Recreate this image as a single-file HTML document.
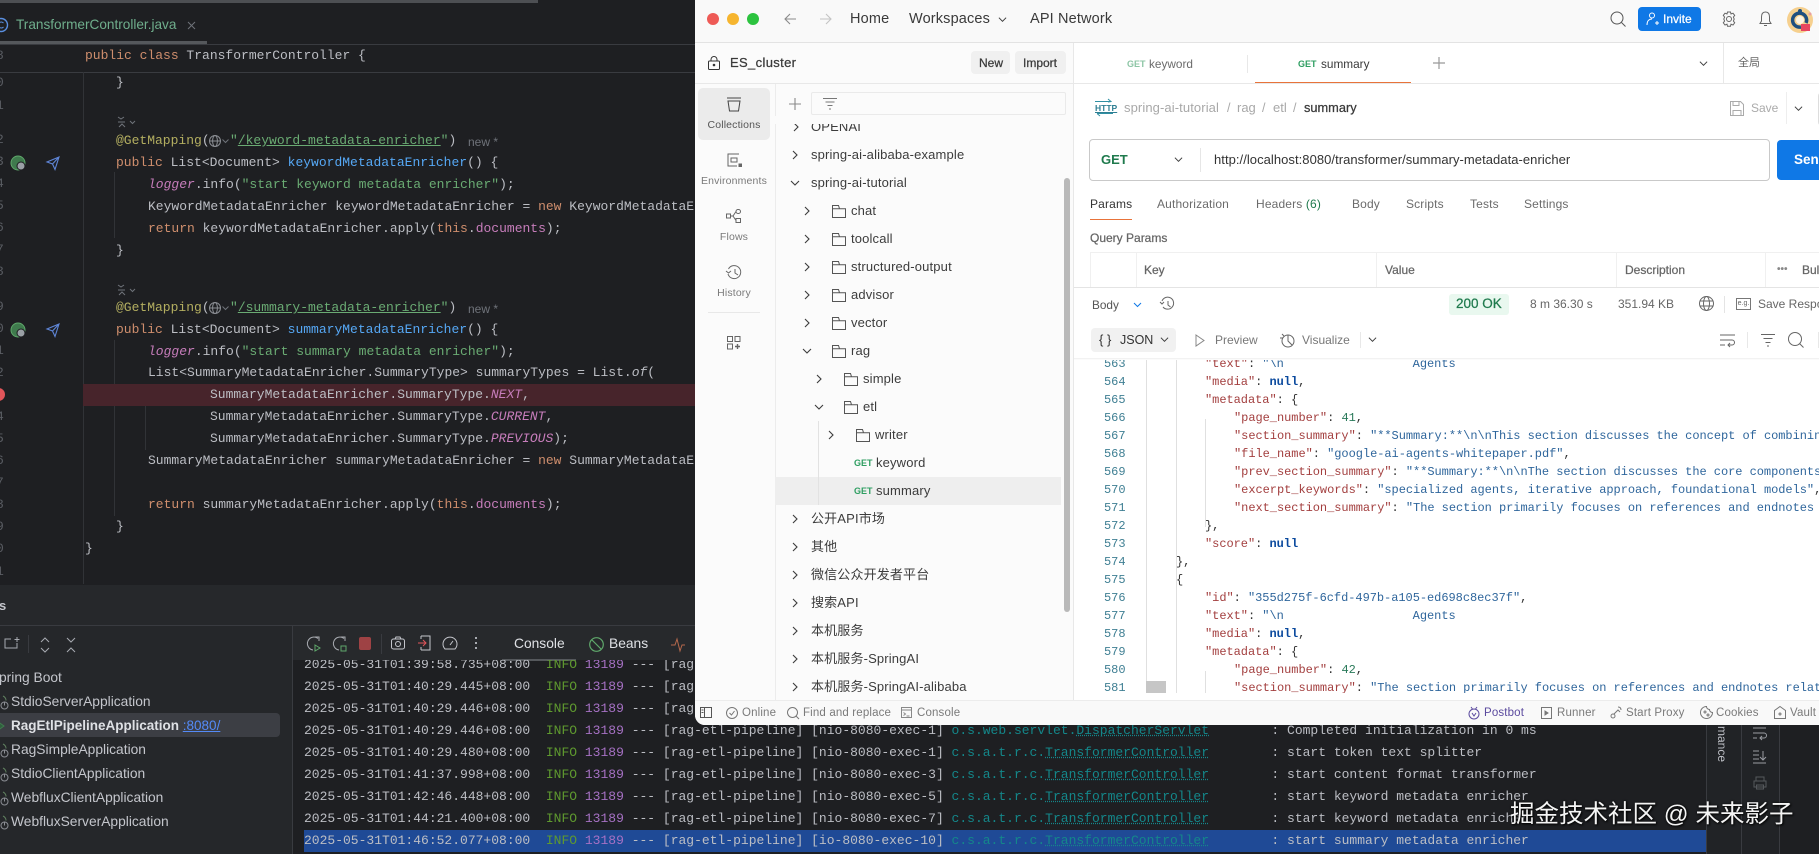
<!DOCTYPE html>
<html lang="zh">
<head>
<meta charset="utf-8">
<title>TransformerController and Postman</title>
<style>
html,body{margin:0;padding:0;width:1819px;height:854px;overflow:hidden;background:#1e1f22}
body{position:relative;font-family:"Liberation Sans","Noto Sans CJK SC",sans-serif}
.t{position:absolute;white-space:pre;line-height:20px;margin-top:-10px}
.b{position:absolute}
svg.i{position:absolute;fill:none;stroke:currentColor;stroke-width:1;overflow:visible}
#ide{position:absolute;left:0;top:0;width:1819px;height:854px;background:#1e1f22;overflow:hidden}
.c{font-family:"Liberation Mono",monospace;font-size:13px;color:#bcbec4}
.k{color:#cf8e6d}.f{color:#56a8f5}.s{color:#6aab73}.a{color:#b3ae60}.p{color:#c77dbb}.it{font-style:italic}
.n{font-family:"Liberation Mono",monospace;font-size:13px;color:#5a5d63}
.u{text-decoration:underline}
.nw{font-family:"Liberation Sans",sans-serif;font-size:12px;color:#6f737a}
.tree{font-size:13.8px;color:#c4c6cc}
.log{position:absolute;left:304px;white-space:pre;font-family:"Liberation Mono",monospace;font-size:13px;line-height:22px;height:22px;color:#bcbec4}
.log i{font-style:normal;color:#5f9a2f}.log b{font-weight:normal;color:#a671c4}.log em{font-style:normal;color:#14878a}.log u{color:#14878a;text-decoration:underline dotted}
#pm{position:absolute;left:0;top:0;width:1819px;height:725px;background:#fff;clip-path:inset(0 0 0 695px round 0 0 0 10px);color:#3a3a3a}
.tr{font-size:13px;color:#3c3c3c;letter-spacing:.15px}
.rl{font-size:10.5px;color:#7a7a7a;transform:translateX(-50%);letter-spacing:.15px}
.g{font-size:9px;font-weight:bold;color:#2f9e62}
.tb{font-size:12px;color:#6b6b6b;letter-spacing:.15px}
.j{font-family:"Liberation Mono",monospace;font-size:12px;color:#333;line-height:18px;margin-top:-9px;letter-spacing:-.04px}
.ln{color:#3f7f93}
.j u{text-decoration:none;color:#a33f3f}.j s{text-decoration:none;color:#2f669c}.j b{color:#0b4a9e}.j em{font-style:normal;color:#2a7a5a}
.sb{font-size:11.5px;color:#7a7a7a;letter-spacing:.15px}
.m{font-weight:normal;-webkit-text-stroke:.25px currentColor}
</style>
</head>
<body>
<svg width="0" height="0" style="position:absolute">
<symbol id="cr" viewBox="0 0 10 10"><path d="M3 1l4 4-4 4" fill="none" stroke="#3c3c3c" stroke-width="1.1"/></symbol>
<symbol id="cd" viewBox="0 0 10 10"><path d="M1 3l4 4 4-4" fill="none" stroke="#3c3c3c" stroke-width="1.1"/></symbol>
<symbol id="fo" viewBox="0 0 14 13"><path d="M.5 12.5V.5h6l1 3.2h6v8.800zM.5 3.700h7" fill="none" stroke="#555" stroke-width="1"/></symbol>
<symbol id="pw" viewBox="0 0 9 16"><path d="M3 1c2 1 3 2.500 3 4.500" fill="none" stroke="#5f7f5f" stroke-width="1"/><circle cx="4.500" cy="10.500" r="3.500" fill="none" stroke="#8a8d93" stroke-width="1"/><path d="M4.500 6.500v4" fill="none" stroke="#8a8d93" stroke-width="1"/></symbol>
</svg>

<div id="ide">
  <div class="b" style="left:0;top:0;width:538px;height:3px;background:#4d4f53"></div>
  <div class="b" style="left:0;top:44px;width:695px;height:1px;background:#393b40"></div>
  <div class="b" style="left:0;top:41px;width:207px;height:3px;background:#55585c"></div>
  <svg class="i" style="left:-6px;top:18px;color:#5a8fe0" width="14" height="14"><circle cx="7" cy="7" r="6.500" stroke-width="1.400"/><path d="M9.500 5a3 3 0 1 0 0 4"/></svg>
  <div class="t" style="left:16px;top:25px;font-size:13.600px;color:#6fae8c">TransformerController.java</div>
  <svg class="i" style="left:187px;top:21px;color:#6f737a" width="9" height="9"><path d="M1 1l7 7M8 1l-7 7"/></svg>
  <div class="b" style="left:0;top:72px;width:695px;height:1px;background:#393b40"></div>
  <div class="b" style="left:83px;top:72px;width:1px;height:512px;background:#313337"></div>
  <div class="b" style="left:114px;top:172px;width:1px;height:66px;background:#313337"></div>
  <div class="b" style="left:114px;top:340px;width:1px;height:176px;background:#313337"></div>
  <div class="b" style="left:145px;top:384px;width:1px;height:66px;background:#313337"></div>
  <div class="b" style="left:83px;top:384px;width:612px;height:22px;background:#47242b"></div>
  <div class="b" style="left:-8px;top:388px;width:13px;height:13px;border-radius:50%;background:#e2555a"></div>

  <div class="t n" style="left:-4px;top:56px">8</div><div class="t n" style="left:-4px;top:83px">0</div><div class="t n" style="left:-4px;top:106px">1</div><div class="t n" style="left:-4px;top:140px">2</div><div class="t n" style="left:-4px;top:162px">3</div><div class="t n" style="left:-4px;top:184px">4</div><div class="t n" style="left:-4px;top:206px">5</div><div class="t n" style="left:-4px;top:228px">6</div><div class="t n" style="left:-4px;top:250px">7</div><div class="t n" style="left:-4px;top:272px">8</div><div class="t n" style="left:-4px;top:307px">9</div><div class="t n" style="left:-4px;top:329px">0</div><div class="t n" style="left:-4px;top:351px">1</div><div class="t n" style="left:-4px;top:373px">2</div><div class="t n" style="left:-4px;top:417px">4</div><div class="t n" style="left:-4px;top:439px">5</div><div class="t n" style="left:-4px;top:461px">6</div><div class="t n" style="left:-4px;top:483px">7</div><div class="t n" style="left:-4px;top:505px">8</div><div class="t n" style="left:-4px;top:527px">9</div><div class="t n" style="left:-4px;top:549px">0</div><div class="t n" style="left:-4px;top:572px">1</div>

  <div class="t c" style="left:85px;top:56px"><span class="k">public class</span> TransformerController {</div>
  <div class="t c" style="left:116px;top:83px">}</div>
  <svg class="i" style="left:117px;top:116px;color:#6f737a" width="20" height="12"><path d="M1 1l3 2 3-2M1 6h7M2 11l3-3 3 3M13 5l2.500 2.500L18 5"/></svg>
  <div class="t c" style="left:116px;top:141px"><span class="a">@GetMapping</span>(</div>
  <svg class="i" style="left:209px;top:135px;color:#8a8d93" width="12" height="12"><circle cx="6" cy="6" r="5.500"/><ellipse cx="6" cy="6" rx="2.400" ry="5.500"/><path d="M.5 6h11"/></svg>
  <svg class="i" style="left:222px;top:139px;color:#6f737a" width="7" height="5"><path d="M.5 .5l3 3 3-3"/></svg>
  <div class="t c" style="left:230px;top:141px"><span class="s">"<span class="u">/keyword-metadata-enricher</span>"</span>)</div>
  <div class="t nw" style="left:468px;top:142px">new *</div>
  <div class="t c" style="left:116px;top:163px"><span class="k">public</span> List&lt;Document&gt; <span class="f">keywordMetadataEnricher</span>() {</div>
  <div class="t c" style="left:148px;top:185px"><span class="p it">logger</span>.info(<span class="s">"start keyword metadata enricher"</span>);</div>
  <div class="t c" style="left:148px;top:207px">KeywordMetadataEnricher keywordMetadataEnricher = <span class="k">new</span> KeywordMetadataEnricher(chatModel, List.of(</div>
  <div class="t c" style="left:148px;top:229px"><span class="k">return</span> keywordMetadataEnricher.apply(<span class="k">this</span>.<span class="p">documents</span>);</div>
  <div class="t c" style="left:116px;top:251px">}</div>
  <svg class="i" style="left:117px;top:284px;color:#6f737a" width="20" height="12"><path d="M1 1l3 2 3-2M1 6h7M2 11l3-3 3 3M13 5l2.500 2.500L18 5"/></svg>
  <div class="t c" style="left:116px;top:308px"><span class="a">@GetMapping</span>(</div>
  <svg class="i" style="left:209px;top:302px;color:#8a8d93" width="12" height="12"><circle cx="6" cy="6" r="5.500"/><ellipse cx="6" cy="6" rx="2.400" ry="5.500"/><path d="M.5 6h11"/></svg>
  <svg class="i" style="left:222px;top:306px;color:#6f737a" width="7" height="5"><path d="M.5 .5l3 3 3-3"/></svg>
  <div class="t c" style="left:230px;top:308px"><span class="s">"<span class="u">/summary-metadata-enricher</span>"</span>)</div>
  <div class="t nw" style="left:468px;top:309px">new *</div>
  <div class="t c" style="left:116px;top:330px"><span class="k">public</span> List&lt;Document&gt; <span class="f">summaryMetadataEnricher</span>() {</div>
  <div class="t c" style="left:148px;top:352px"><span class="p it">logger</span>.info(<span class="s">"start summary metadata enricher"</span>);</div>
  <div class="t c" style="left:148px;top:373px">List&lt;SummaryMetadataEnricher.SummaryType&gt; summaryTypes = List.<span class="it">of</span>(</div>
  <div class="t c" style="left:210px;top:395px">SummaryMetadataEnricher.SummaryType.<span class="p it">NEXT</span>,</div>
  <div class="t c" style="left:210px;top:417px">SummaryMetadataEnricher.SummaryType.<span class="p it">CURRENT</span>,</div>
  <div class="t c" style="left:210px;top:439px">SummaryMetadataEnricher.SummaryType.<span class="p it">PREVIOUS</span>);</div>
  <div class="t c" style="left:148px;top:461px">SummaryMetadataEnricher summaryMetadataEnricher = <span class="k">new</span> SummaryMetadataEnricher(chatModel, summaryTypes);</div>
  <div class="t c" style="left:148px;top:505px"><span class="k">return</span> summaryMetadataEnricher.apply(<span class="k">this</span>.<span class="p">documents</span>);</div>
  <div class="t c" style="left:116px;top:527px">}</div>
  <div class="t c" style="left:85px;top:549px">}</div>

  <svg class="i" style="left:10px;top:155px" width="16" height="16"><circle cx="8" cy="8" r="7" fill="#3f7a4d" stroke="#5fa86b"/><circle cx="11" cy="11" r="4" fill="#9aa0a6" stroke="#1e1f22"/></svg>
  <svg class="i" style="left:10px;top:322px" width="16" height="16"><circle cx="8" cy="8" r="7" fill="#3f7a4d" stroke="#5fa86b"/><circle cx="11" cy="11" r="4" fill="#9aa0a6" stroke="#1e1f22"/></svg>
  <svg class="i" style="left:46px;top:156px;color:#5f86d8" width="14" height="14"><path d="M13 1L1 6l5.500 2L9 13.500z M13 1L6.500 8" stroke-width="1.100"/></svg>
  <svg class="i" style="left:46px;top:323px;color:#5f86d8" width="14" height="14"><path d="M13 1L1 6l5.500 2L9 13.500z M13 1L6.500 8" stroke-width="1.100"/></svg>

  <!-- bottom panel -->
  <div class="b" style="left:0;top:585px;width:1819px;height:40px;background:#26282b"></div>
  <div class="b" style="left:0;top:625px;width:1819px;height:1px;background:#393b40"></div>
  <div class="b" style="left:0;top:626px;width:292px;height:228px;background:#25272a"></div>
  <div class="b" style="left:292px;top:626px;width:1px;height:228px;background:#393b40"></div>
  <div class="b" style="left:293px;top:626px;width:1526px;height:34px;background:#27292c"></div>
  <div class="t" style="left:-1px;top:606px;font-size:13px;font-weight:bold;color:#c4c6cc">s</div>
  <svg class="i" style="left:4px;top:636px;color:#a8abb1" width="17" height="14"><path d="M7 3H1v9h12V7M13 1v5M10.500 3.500h5"/></svg>
  <div class="b" style="left:28px;top:635px;width:1px;height:18px;background:#393b40"></div>
  <svg class="i" style="left:40px;top:637px;color:#a8abb1" width="10" height="16"><path d="M1 5l4-4 4 4M1 11l4 4 4-4"/></svg>
  <svg class="i" style="left:66px;top:637px;color:#a8abb1" width="10" height="16"><path d="M1 1l4 4 4-4M1 15l4-4 4 4"/></svg>
  <div class="t tree" style="left:-1px;top:678px;letter-spacing:0">pring Boot</div>
  <div class="b" style="left:0;top:713px;width:280px;height:24px;background:#3c3e44;border-radius:0 4px 4px 0"></div>
  <div class="t tree" style="left:11px;top:702px">StdioServerApplication</div>
  <div class="t tree" style="left:11px;top:726px;font-size:13.500px;font-weight:bold;color:#dfe1e5">RagEtlPipelineApplication <span style="font-weight:normal;color:#548af7;text-decoration:underline">:8080/</span></div>
  <div class="t tree" style="left:11px;top:750px">RagSimpleApplication</div>
  <div class="t tree" style="left:11px;top:774px">StdioClientApplication</div>
  <div class="t tree" style="left:11px;top:798px">WebfluxClientApplication</div>
  <div class="t tree" style="left:11px;top:822px">WebfluxServerApplication</div>
  <svg class="i" style="left:0;top:695px" width="9" height="16"><use href="#pw"/></svg>
  <svg class="i" style="left:-4px;top:720px;color:#3f7a4d" width="10" height="12"><path d="M1 1l7 5-7 5z" fill="#2f5f3d"/></svg>
  <svg class="i" style="left:0;top:743px" width="9" height="16"><use href="#pw"/></svg>
  <svg class="i" style="left:0;top:767px" width="9" height="16"><use href="#pw"/></svg>
  <svg class="i" style="left:0;top:791px" width="9" height="16"><use href="#pw"/></svg>
  <svg class="i" style="left:0;top:815px" width="9" height="16"><use href="#pw"/></svg>

  <!-- console toolbar -->
  <svg class="i" style="left:306px;top:635px;color:#a8abb1" width="16" height="18"><path d="M12 3.500A6.500 6.500 0 1 0 7 15"/><path d="M9 2h4v4"/><path d="M9 10l5 3-5 3z" stroke="#5fa86b"/></svg>
  <svg class="i" style="left:332px;top:635px;color:#a8abb1" width="16" height="18"><path d="M12 3.500A6.500 6.500 0 1 0 7 15"/><path d="M9 2h4v4"/><rect x="9" y="11" width="5" height="5" stroke="#5fa86b"/></svg>
  <div class="b" style="left:359px;top:637px;width:12px;height:13px;border-radius:2px;background:#9e4244"></div>
  <div class="b" style="left:381px;top:634px;width:1px;height:20px;background:#393b40"></div>
  <svg class="i" style="left:391px;top:636px;color:#c4c6cc" width="15" height="15"><rect x=".5" y="3" width="13" height="10" rx="2"/><circle cx="7" cy="8" r="2.500"/><path d="M4 3l1-2h4l1 2"/></svg>
  <svg class="i" style="left:418px;top:635px" width="14" height="16"><path d="M3 1h9v14H3M3 4V1M3 15v-3" stroke="#c4c6cc"/><path d="M0 8h8M5 5l3 3-3 3" stroke="#e2555a"/></svg>
  <svg class="i" style="left:442px;top:636px;color:#c4c6cc" width="17" height="16"><path d="M3 13a7 7 0 1 1 10 0z M8 9l3-4"/></svg>
  <div class="b" style="left:475px;top:637px;width:2px;height:2px;background:#a8abb1;box-shadow:0 5px 0 #a8abb1,0 10px 0 #a8abb1"></div>
  <div class="t" style="left:514px;top:644px;font-size:13.800px;color:#dfe1e5">Console</div>
  <div class="b" style="left:502px;top:659px;width:74px;height:2px;background:#55585c"></div>
  <svg class="i" style="left:589px;top:637px;color:#5fa86b" width="15" height="15"><circle cx="7.500" cy="7.500" r="6.800" stroke-width="1.200"/><path d="M3 3l9 9" stroke-width="1.200"/></svg>
  <div class="t" style="left:609px;top:644px;font-size:13.800px;color:#dfe1e5">Beans</div>
  <svg class="i" style="left:671px;top:637px;color:#b5684b" width="15" height="15"><path d="M0 8h4l2-6 3 12 2-6h3"/></svg>

  <div class="b" style="left:293px;top:660px;width:1526px;height:194px;overflow:hidden">
    <div class="b" style="left:11px;top:170px;width:1402px;height:22px;background:#1f4a96"></div>
    <div class="log" style="left:11px;top:-6px">2025-05-31T01:39:58.735+08:00  <i>INFO</i> <b>13189</b> --- [rag-etl-pipeline] [nio-8080-exec-1]</div>
    <div class="log" style="left:11px;top:16px">2025-05-31T01:40:29.445+08:00  <i>INFO</i> <b>13189</b> --- [rag-etl-pipeline] [nio-8080-exec-1]</div>
    <div class="log" style="left:11px;top:38px">2025-05-31T01:40:29.446+08:00  <i>INFO</i> <b>13189</b> --- [rag-etl-pipeline] [nio-8080-exec-1]</div>
    <div class="log" style="left:11px;top:60px">2025-05-31T01:40:29.446+08:00  <i>INFO</i> <b>13189</b> --- [rag-etl-pipeline] [nio-8080-exec-1] <em>o.s.web.servlet.</em><u>DispatcherServlet</u>        : Completed initialization in 0 ms</div>
    <div class="log" style="left:11px;top:82px">2025-05-31T01:40:29.480+08:00  <i>INFO</i> <b>13189</b> --- [rag-etl-pipeline] [nio-8080-exec-1] <em>c.s.a.t.r.c.</em><u>TransformerController</u>        : start token text splitter</div>
    <div class="log" style="left:11px;top:104px">2025-05-31T01:41:37.998+08:00  <i>INFO</i> <b>13189</b> --- [rag-etl-pipeline] [nio-8080-exec-3] <em>c.s.a.t.r.c.</em><u>TransformerController</u>        : start content format transformer</div>
    <div class="log" style="left:11px;top:126px">2025-05-31T01:42:46.448+08:00  <i>INFO</i> <b>13189</b> --- [rag-etl-pipeline] [nio-8080-exec-5] <em>c.s.a.t.r.c.</em><u>TransformerController</u>        : start keyword metadata enricher</div>
    <div class="log" style="left:11px;top:148px">2025-05-31T01:44:21.400+08:00  <i>INFO</i> <b>13189</b> --- [rag-etl-pipeline] [nio-8080-exec-7] <em>c.s.a.t.r.c.</em><u>TransformerController</u>        : start keyword metadata enricher</div>
    <div class="log" style="left:11px;top:170px">2025-05-31T01:46:52.077+08:00  <i>INFO</i> <b>13189</b> --- [rag-etl-pipeline] [io-8080-exec-10] <em>c.s.a.t.r.c.</em><u>TransformerController</u>        : start summary metadata enricher</div>
  </div>

  <!-- right strips -->
  <div class="b" style="left:1706px;top:660px;width:35px;height:194px;background:#212326;border-left:1px solid #393b40;box-sizing:border-box"></div>
  <div class="b" style="left:1741px;top:660px;width:39px;height:194px;background:#212326;border-left:1px solid #393b40;border-right:1px solid #393b40;box-sizing:border-box"></div>
  <div class="b" style="left:1780px;top:660px;width:39px;height:194px;background:#1e1f22"></div>
  <div class="t" style="left:1722px;top:744px;font-size:12px;color:#bcbec4;transform:translate(-50%,0) rotate(90deg)">mance</div>
  <svg class="i" style="left:1753px;top:726px;color:#9a9da3" width="14" height="14"><path d="M0 2h13M0 7h11a2.500 2.500 0 0 1 0 5H7M9 10l-2 2 2 2M0 12h4"/></svg>
  <svg class="i" style="left:1753px;top:750px;color:#9a9da3" width="14" height="14"><path d="M0 1h6M0 5h6M0 9h6M10 1v9M7 7l3 3 3-3M0 13h13"/></svg>
  <svg class="i" style="left:1753px;top:776px;color:#55585c" width="14" height="14"><rect x="3" y="1" width="8" height="4"/><rect x="1" y="5" width="12" height="6"/><rect x="3.500" y="9" width="7" height="4"/></svg>

  <div class="t" style="left:1510px;top:815px;font-size:24.500px;color:#f4f4f4;text-shadow:1px 1px 2px #000,0 0 2px rgba(0,0,0,.7);line-height:30px;margin-top:-15px">掘金技术社区 @ 未来影子</div>
</div>

<div id="pm">
  <!-- top bar -->
  <div class="b" style="left:695px;top:0;width:1124px;height:42px;background:#f9f9f9;border-bottom:1px solid #e3e3e3"></div>
  <div class="b" style="left:707px;top:13px;width:12px;height:12px;border-radius:50%;background:#ee5a56"></div>
  <div class="b" style="left:727px;top:13px;width:12px;height:12px;border-radius:50%;background:#f6b52f"></div>
  <div class="b" style="left:747px;top:13px;width:12px;height:12px;border-radius:50%;background:#2cc33f"></div>
  <svg class="i" style="left:784px;top:13px;color:#8a8a8a" width="13" height="12"><path d="M12 6H1M6 1L1 6l5 5" stroke-width="1.100"/></svg>
  <svg class="i" style="left:819px;top:13px;color:#c4c4c4" width="13" height="12"><path d="M1 6h11M7 1l5 5-5 5" stroke-width="1.100"/></svg>
  <div class="t" style="left:850px;top:19px;font-size:14.500px;color:#3a3a3a;letter-spacing:.15px">Home</div>
  <div class="t" style="left:909px;top:19px;font-size:14.500px;color:#3a3a3a;letter-spacing:.15px">Workspaces</div>
  <svg class="i" style="left:998px;top:15px;width:9px;height:9px"><use href="#cd" width="9" height="9"/></svg>
  <div class="t" style="left:1030px;top:19px;font-size:14.500px;color:#3a3a3a;letter-spacing:.15px">API Network</div>
  <svg class="i" style="left:1610px;top:11px;color:#555" width="16" height="16"><circle cx="7" cy="7" r="6"/><path d="M11.500 11.500l4 4"/></svg>
  <div class="b" style="left:1638px;top:7px;width:63px;height:24px;border-radius:4px;background:#0f78e6"></div>
  <svg class="i" style="left:1646px;top:12px;color:#fff" width="13" height="14"><circle cx="6" cy="3.500" r="2.500"/><path d="M1 13c0-4 2-6 5-6M9 11h4M11 9v4"/></svg>
  <div class="t m" style="left:1663px;top:19px;font-size:12px;color:#fff">Invite</div>
  <svg class="i" style="left:1721px;top:11px;color:#666" width="16" height="16"><circle cx="8" cy="8" r="2.500"/><path d="M6.500 1h3l.5 2 2-.8 1.700 2.200-1.300 1.700.8 2-.8 2 1.300 1.700-1.700 2.200-2-.8-.5 2h-3l-.5-2-2 .8-1.700-2.200 1.300-1.700-.8-2 .8-2L2.300 4.400 4 2.200l2 .8z"/></svg>
  <svg class="i" style="left:1759px;top:11px;color:#666" width="13" height="16"><path d="M6.500 1c-3 0-4 2-4 5v4L1 12.500h11L10.500 10V6c0-3-1-5-4-5zM5 14.500h3"/></svg>
  <svg class="i" style="left:1787px;top:7px" width="26" height="26"><circle cx="13" cy="13" r="13" fill="#f6d08e" stroke="none"/><path d="M19 16a7 7 0 1 0-5 4" stroke="#1f4f7f" stroke-width="3.500" fill="none"/><circle cx="13" cy="13" r="4" fill="#fbf3e4" stroke="none"/><rect x="14" y="17" width="9" height="7" fill="#e8455f" stroke="none"/><circle cx="13" cy="4" r="2" fill="#1f4f7f" stroke="none"/><circle cx="23" cy="7" r="1.500" fill="#e8a0a0" stroke="none"/></svg>

  <!-- left column -->
  <div class="b" style="left:695px;top:43px;width:378px;height:657px;background:#fbfbfb;border-right:1px solid #e8e8e8"></div>
  <div class="b" style="left:695px;top:83px;width:378px;height:1px;background:#e8e8e8"></div>
  <div class="b" style="left:775px;top:84px;width:1px;height:616px;background:#ececec"></div>
  <svg class="i" style="left:708px;top:56px;color:#333" width="12" height="14"><rect x=".5" y="5" width="11" height="8.500" rx="1"/><path d="M3 5V3.500a3 3 0 0 1 6 0V5"/><circle cx="6" cy="9" r=".8" fill="#333"/></svg>
  <div class="t m" style="left:730px;top:63px;font-size:13px;color:#3a3a3a;letter-spacing:.35px">ES_cluster</div>
  <div class="b" style="left:971px;top:51px;width:39px;height:23px;background:#f0f0f0;border-radius:4px"></div>
  <div class="b" style="left:1015px;top:51px;width:51px;height:23px;background:#f0f0f0;border-radius:4px"></div>
  <div class="t m" style="left:979px;top:63px;font-size:12px;color:#3a3a3a">New</div>
  <div class="t m" style="left:1023px;top:63px;font-size:12px;color:#3a3a3a">Import</div>

  <!-- rail -->
  <div class="b" style="left:698px;top:88px;width:72px;height:52px;background:#ebebeb;border-radius:5px"></div>
  <svg class="i" style="left:727px;top:97px;color:#444" width="14" height="15"><path d="M0 1h14M1 4h12l-1.500 10h-9z"/></svg>
  <div class="t rl" style="left:734px;top:125px;color:#555">Collections</div>
  <svg class="i" style="left:727px;top:153px;color:#666" width="15" height="14"><path d="M12 1H1v12h9M4 5h6v4H4z"/><rect x="12" y="11" width="2.500" height="2.500" fill="#666"/></svg>
  <div class="t rl" style="left:734px;top:181px">Environments</div>
  <svg class="i" style="left:726px;top:209px;color:#666" width="16" height="14"><rect x=".5" y="5" width="4" height="4"/><rect x="10" y=".5" width="4.500" height="4" rx="2"/><rect x="10" y="9.500" width="4.500" height="4"/><path d="M4.500 7H7l3-4.500M7 7l3 4.500"/></svg>
  <div class="t rl" style="left:734px;top:237px">Flows</div>
  <svg class="i" style="left:726px;top:265px;color:#666" width="16" height="15"><path d="M2.500 4A6.500 6.500 0 1 1 2 9M0 6l2.500 2L5 6M9 4v4l3 2"/></svg>
  <div class="t rl" style="left:734px;top:293px">History</div>
  <div class="b" style="left:708px;top:312px;width:52px;height:1px;background:#e8e8e8"></div>
  <svg class="i" style="left:727px;top:336px;color:#666" width="14" height="14"><rect x=".5" y=".5" width="5" height="5"/><rect x="8" y=".5" width="5" height="5"/><rect x=".5" y="8" width="5" height="5"/><path d="M10.500 8v5M8 10.500h5" stroke-width="1.400"/></svg>

  <!-- tree tools -->
  <svg class="i" style="left:789px;top:98px;color:#888" width="12" height="12"><path d="M6 0v12M0 6h12" stroke-width="1.100"/></svg>
  <div class="b" style="left:811px;top:92px;width:255px;height:23px;border:1px solid #eaeaea;box-sizing:border-box;border-radius:2px"></div>
  <svg class="i" style="left:823px;top:98px;color:#777" width="14" height="12"><path d="M0 .5h14M2.500 4h9M4.500 7.500h5M6 11h2"/></svg>

  <div class="b" style="left:775px;top:477px;width:286px;height:28px;background:#eeeeee"></div>
  <div class="b" style="left:818px;top:421px;width:1px;height:84px;background:#e2e2e2"></div>

  <div class="b" style="left:776px;top:116px;width:288px;height:584px;overflow:hidden">
    <div class="t tr" style="left:35px;top:11px">OPENAI</div>
    <svg class="i" style="left:15px;top:6px" width="10" height="10"><use href="#cr"/></svg>
  </div>
  <div class="b" style="left:775px;top:116px;width:290px;height:8px;background:#fbfbfb"></div>

  <svg class="i" style="left:790px;top:150px" width="10" height="10"><use href="#cr"/></svg>
  <svg class="i" style="left:790px;top:178px" width="10" height="10"><use href="#cd"/></svg>
  <svg class="i" style="left:802px;top:206px" width="10" height="10"><use href="#cr"/></svg>
  <svg class="i" style="left:802px;top:234px" width="10" height="10"><use href="#cr"/></svg>
  <svg class="i" style="left:802px;top:262px" width="10" height="10"><use href="#cr"/></svg>
  <svg class="i" style="left:802px;top:290px" width="10" height="10"><use href="#cr"/></svg>
  <svg class="i" style="left:802px;top:318px" width="10" height="10"><use href="#cr"/></svg>
  <svg class="i" style="left:802px;top:346px" width="10" height="10"><use href="#cd"/></svg>
  <svg class="i" style="left:814px;top:374px" width="10" height="10"><use href="#cr"/></svg>
  <svg class="i" style="left:814px;top:402px" width="10" height="10"><use href="#cd"/></svg>
  <svg class="i" style="left:826px;top:430px" width="10" height="10"><use href="#cr"/></svg>
  <svg class="i" style="left:790px;top:514px" width="10" height="10"><use href="#cr"/></svg>
  <svg class="i" style="left:790px;top:542px" width="10" height="10"><use href="#cr"/></svg>
  <svg class="i" style="left:790px;top:570px" width="10" height="10"><use href="#cr"/></svg>
  <svg class="i" style="left:790px;top:598px" width="10" height="10"><use href="#cr"/></svg>
  <svg class="i" style="left:790px;top:626px" width="10" height="10"><use href="#cr"/></svg>
  <svg class="i" style="left:790px;top:654px" width="10" height="10"><use href="#cr"/></svg>
  <svg class="i" style="left:790px;top:682px" width="10" height="10"><use href="#cr"/></svg>

  <svg class="i" style="left:832px;top:205px" width="14" height="13"><use href="#fo"/></svg>
  <svg class="i" style="left:832px;top:233px" width="14" height="13"><use href="#fo"/></svg>
  <svg class="i" style="left:832px;top:261px" width="14" height="13"><use href="#fo"/></svg>
  <svg class="i" style="left:832px;top:289px" width="14" height="13"><use href="#fo"/></svg>
  <svg class="i" style="left:832px;top:317px" width="14" height="13"><use href="#fo"/></svg>
  <svg class="i" style="left:832px;top:345px" width="14" height="13"><use href="#fo"/></svg>
  <svg class="i" style="left:844px;top:373px" width="14" height="13"><use href="#fo"/></svg>
  <svg class="i" style="left:844px;top:401px" width="14" height="13"><use href="#fo"/></svg>
  <svg class="i" style="left:856px;top:429px" width="14" height="13"><use href="#fo"/></svg>

  <div class="t tr" style="left:811px;top:155px">spring-ai-alibaba-example</div>
  <div class="t tr" style="left:811px;top:183px">spring-ai-tutorial</div>
  <div class="t tr" style="left:851px;top:211px">chat</div>
  <div class="t tr" style="left:851px;top:239px">toolcall</div>
  <div class="t tr" style="left:851px;top:267px">structured-output</div>
  <div class="t tr" style="left:851px;top:295px">advisor</div>
  <div class="t tr" style="left:851px;top:323px">vector</div>
  <div class="t tr" style="left:851px;top:351px">rag</div>
  <div class="t tr" style="left:863px;top:379px">simple</div>
  <div class="t tr" style="left:863px;top:407px">etl</div>
  <div class="t tr" style="left:875px;top:435px">writer</div>
  <div class="t g" style="left:854px;top:463px">GET</div>
  <div class="t tr" style="left:876px;top:463px">keyword</div>
  <div class="t g" style="left:854px;top:491px">GET</div>
  <div class="t tr" style="left:876px;top:491px">summary</div>
  <div class="t tr" style="left:811px;top:519px">公开API市场</div>
  <div class="t tr" style="left:811px;top:547px">其他</div>
  <div class="t tr" style="left:811px;top:575px">微信公众开发者平台</div>
  <div class="t tr" style="left:811px;top:603px">搜索API</div>
  <div class="t tr" style="left:811px;top:631px">本机服务</div>
  <div class="t tr" style="left:811px;top:659px">本机服务-SpringAI</div>
  <div class="t tr" style="left:811px;top:687px">本机服务-SpringAI-alibaba</div>

  <div class="b" style="left:1064px;top:178px;width:6px;height:434px;background:#b9b9b9;border-radius:3px"></div>

  <!-- tabs -->
  <div class="t g" style="left:1127px;top:64px;color:#8cc5a5">GET</div>
  <div class="t" style="left:1149px;top:64px;font-size:11.800px;color:#6b6b6b">keyword</div>
  <div class="b" style="left:1247px;top:55px;width:1px;height:18px;background:#e8e8e8"></div>
  <div class="t g" style="left:1298px;top:64px">GET</div>
  <div class="t" style="left:1321px;top:64px;font-size:11.800px;color:#3a3a3a">summary</div>
  <div class="b" style="left:1255px;top:82px;width:156px;height:1px;background:#e8733a"></div>
  <svg class="i" style="left:1433px;top:57px;color:#999" width="12" height="12"><path d="M6 0v12M0 6h12" stroke-width="1.200"/></svg>
  <svg class="i" style="left:1699px;top:59px" width="9" height="9"><use href="#cd" width="9" height="9"/></svg>
  <div class="b" style="left:1723px;top:43px;width:1px;height:40px;background:#e8e8e8"></div>
  <div class="t" style="left:1738px;top:63px;font-size:11px;color:#666">全局</div>
  <div class="b" style="left:1074px;top:83px;width:745px;height:1px;background:#e8e8e8"></div>

  <!-- breadcrumb -->
  <svg class="i" style="left:1095px;top:99px;color:#2f8fa3" width="18" height="18"><path d="M0 2.500h16M13 0l3 2.500L13 3M18 14.500H2M5 17l-3-2.500"/></svg>
  <div class="t" style="left:1095px;top:108px;font-size:8.500px;font-weight:bold;color:#2f7f93;text-decoration:underline">HTTP</div>
  <div class="t" style="left:1124px;top:108px;font-size:13px;color:#a8a8a8;letter-spacing:.1px">spring-ai-tutorial</div>
  <div class="t" style="left:1227px;top:108px;font-size:12.500px;color:#a8a8a8">/</div>
  <div class="t" style="left:1237px;top:108px;font-size:13px;color:#a8a8a8">rag</div>
  <div class="t" style="left:1262px;top:108px;font-size:12.500px;color:#a8a8a8">/</div>
  <div class="t" style="left:1273px;top:108px;font-size:13px;color:#a8a8a8">etl</div>
  <div class="t" style="left:1293px;top:108px;font-size:12.500px;color:#a8a8a8">/</div>
  <div class="t m" style="left:1304px;top:108px;font-size:12.800px;color:#3a3a3a">summary</div>
  <svg class="i" style="left:1730px;top:101px;color:#aaa" width="14" height="15"><path d="M.5.500h10l3 3v11H.500zM3 .5v4h6v-4M3 14.500v-5h8v5"/></svg>
  <div class="t" style="left:1751px;top:108px;font-size:12px;color:#aaa">Save</div>
  <div class="b" style="left:1786px;top:92px;width:1px;height:32px;background:#eee"></div>
  <svg class="i" style="left:1794px;top:104px" width="9" height="9"><use href="#cd" width="9" height="9"/></svg>
  <div class="b" style="left:1818px;top:92px;width:6px;height:32px;border:1px solid #ddd;border-radius:4px"></div>

  <!-- url -->
  <div class="b" style="left:1089px;top:139px;width:681px;height:42px;border:1px solid #c9c9c9;border-radius:4px;box-sizing:border-box"></div>
  <div class="t" style="left:1101px;top:160px;font-size:13px;font-weight:bold;color:#1f7a4d">GET</div>
  <svg class="i" style="left:1174px;top:155px" width="9" height="9"><use href="#cd" width="9" height="9"/></svg>
  <div class="b" style="left:1200px;top:148px;width:1px;height:24px;background:#e6e6e6"></div>
  <div class="t" style="left:1214px;top:160px;font-size:13px;color:#333;letter-spacing:.05px">http://localhost:8080/transformer/summary-metadata-enricher</div>
  <div class="b" style="left:1777px;top:140px;width:50px;height:40px;background:#0f78e6;border-radius:4px"></div>
  <div class="t" style="left:1794px;top:160px;font-size:13.500px;font-weight:bold;color:#fff">Send</div>

  <!-- request tabs -->
  <div class="t tb" style="left:1090px;top:204px;color:#333">Params</div>
  <div class="b" style="left:1090px;top:219px;width:42px;height:1px;background:#e8733a"></div>
  <div class="t tb" style="left:1157px;top:204px">Authorization</div>
  <div class="t tb" style="left:1256px;top:204px">Headers <span style="color:#1f7a4d">(6)</span></div>
  <div class="t tb" style="left:1352px;top:204px">Body</div>
  <div class="t tb" style="left:1406px;top:204px">Scripts</div>
  <div class="t tb" style="left:1470px;top:204px">Tests</div>
  <div class="t tb" style="left:1524px;top:204px">Settings</div>
  <div class="t m" style="left:1090px;top:238px;font-size:12px;color:#666">Query Params</div>
  <div class="b" style="left:1090px;top:252px;width:729px;height:1px;background:#f0f0f0"></div>
  <div class="b" style="left:1090px;top:252px;width:1px;height:35px;background:#f0f0f0"></div>
  <div class="b" style="left:1136px;top:252px;width:1px;height:35px;background:#f0f0f0"></div>
  <div class="b" style="left:1376px;top:252px;width:1px;height:35px;background:#f0f0f0"></div>
  <div class="b" style="left:1616px;top:252px;width:1px;height:35px;background:#f0f0f0"></div>
  <div class="b" style="left:1765px;top:252px;width:1px;height:35px;background:#f0f0f0"></div>
  <div class="t m" style="left:1144px;top:270px;font-size:12px;color:#666">Key</div>
  <div class="t m" style="left:1385px;top:270px;font-size:12px;color:#666">Value</div>
  <div class="t m" style="left:1625px;top:270px;font-size:12px;color:#666">Description</div>
  <div class="t" style="left:1777px;top:270px;font-size:10px;font-weight:bold;color:#888">•••</div>
  <div class="t m" style="left:1802px;top:270px;font-size:12px;color:#666">Bulk</div>
  <div class="b" style="left:1074px;top:287px;width:745px;height:1px;background:#e4e4e4"></div>

  <!-- response -->
  <div class="t" style="left:1092px;top:305px;font-size:11.800px;color:#555">Body</div>
  <svg class="i" style="left:1133px;top:300px" width="9" height="9"><path d="M1 3l3.500 3.500L8 3" stroke="#0f78e6" fill="none"/></svg>
  <svg class="i" style="left:1160px;top:297px;color:#666" width="15" height="14"><path d="M2 4A6 6 0 1 1 3 10M0 5l2 2 2-2M8 4v4l2.500 2"/></svg>
  <div class="b" style="left:1449px;top:294px;width:60px;height:21px;background:#e9f8ef;border-radius:3px"></div>
  <div class="t m" style="left:1456px;top:304px;font-size:13.500px;color:#1f7a4d">200 OK</div>
  <div class="t" style="left:1530px;top:304px;font-size:12px;color:#666">8 m 36.30 s</div>
  <div class="t" style="left:1618px;top:304px;font-size:12px;color:#666">351.94 KB</div>
  <svg class="i" style="left:1699px;top:296px;color:#666" width="15" height="15"><circle cx="7.500" cy="7.500" r="7"/><ellipse cx="7.500" cy="7.500" rx="3" ry="7"/><path d="M1 5h13M1 10h13"/></svg>
  <div class="b" style="left:1724px;top:296px;width:1px;height:17px;background:#e4e4e4"></div>
  <div class="b" style="left:1736px;top:298px;width:15px;height:12px;border:1px solid #777;box-sizing:border-box;font-size:7px;line-height:10px;text-align:center;color:#666">e.g.</div>
  <div class="t" style="left:1758px;top:304px;font-size:12px;color:#666">Save Response</div>

  <div class="b" style="left:1091px;top:328px;width:85px;height:24px;background:#f1f1f1;border-radius:4px"></div>
  <div class="t" style="left:1099px;top:340px;font-size:13px;color:#333">{ } </div>
  <div class="t" style="left:1120px;top:340px;font-size:12.500px;color:#333">JSON</div>
  <svg class="i" style="left:1160px;top:335px" width="9" height="9"><use href="#cd" width="9" height="9"/></svg>
  <svg class="i" style="left:1195px;top:334px;color:#888" width="10" height="13"><path d="M1 1l8 5.500-8 5.500z"/></svg>
  <div class="t" style="left:1215px;top:340px;font-size:12px;color:#777">Preview</div>
  <svg class="i" style="left:1280px;top:332px;color:#666" width="15" height="16"><circle cx="8" cy="9" r="6"/><path d="M8 3v6l4 4M2 2l2 2M0 6h3"/></svg>
  <div class="t" style="left:1302px;top:340px;font-size:12px;color:#777">Visualize</div>
  <div class="b" style="left:1360px;top:332px;width:1px;height:16px;background:#e8e8e8"></div>
  <svg class="i" style="left:1368px;top:335px" width="9" height="9"><use href="#cd" width="9" height="9"/></svg>
  <svg class="i" style="left:1720px;top:334px;color:#666" width="15" height="13"><path d="M0 1h15M0 6h12a2.500 2.500 0 0 1 0 5H8M10 9l-2 2 2 2M0 11h5"/></svg>
  <div class="b" style="left:1747px;top:332px;width:1px;height:16px;background:#e8e8e8"></div>
  <svg class="i" style="left:1761px;top:334px;color:#666" width="14" height="13"><path d="M0 .5h14M2.500 4.500h9M4.500 8.500h5M6 12h2"/></svg>
  <svg class="i" style="left:1788px;top:332px;color:#666" width="16" height="16"><circle cx="7" cy="7" r="6.500"/><path d="M11.500 11.500l4 4"/></svg>
  <div class="b" style="left:1818px;top:332px;width:1px;height:16px;background:#e8e8e8"></div>
  <div class="b" style="left:1074px;top:358px;width:745px;height:2px;background:linear-gradient(#eee,#fff)"></div>

  <!-- json -->
  <div class="b" style="left:1074px;top:360px;width:745px;height:333px;overflow:hidden">
    <div class="b" style="left:72px;top:0;width:1px;height:333px;background:#e0e0e0"></div>
    <div class="b" style="left:102px;top:0;width:1px;height:333px;background:#e0e0e0"></div>
    <div class="b" style="left:131px;top:59px;width:1px;height:108px;background:#e0e0e0"></div>
    <div class="b" style="left:131px;top:311px;width:1px;height:22px;background:#e0e0e0"></div>
    <div class="b" style="left:72px;top:321px;width:20px;height:12px;background:#c6c6c6"></div>
    <div class="t j ln" style="left:30px;top:4px">563</div><div class="t j" style="left:131px;top:4px"><u>"text"</u>: <s>"\n                  Agents</s></div>
    <div class="t j ln" style="left:30px;top:22px">564</div><div class="t j" style="left:131px;top:22px"><u>"media"</u>: <b>null</b>,</div>
    <div class="t j ln" style="left:30px;top:40px">565</div><div class="t j" style="left:131px;top:40px"><u>"metadata"</u>: {</div>
    <div class="t j ln" style="left:30px;top:58px">566</div><div class="t j" style="left:160px;top:58px"><u>"page_number"</u>: <em>41</em>,</div>
    <div class="t j ln" style="left:30px;top:76px">567</div><div class="t j" style="left:160px;top:76px"><u>"section_summary"</u>: <s>"**Summary:**\n\nThis section discusses the concept of combining multiple</s></div>
    <div class="t j ln" style="left:30px;top:94px">568</div><div class="t j" style="left:160px;top:94px"><u>"file_name"</u>: <s>"google-ai-agents-whitepaper.pdf"</s>,</div>
    <div class="t j ln" style="left:30px;top:112px">569</div><div class="t j" style="left:160px;top:112px"><u>"prev_section_summary"</u>: <s>"**Summary:**\n\nThe section discusses the core components of</s></div>
    <div class="t j ln" style="left:30px;top:130px">570</div><div class="t j" style="left:160px;top:130px"><u>"excerpt_keywords"</u>: <s>"specialized agents, iterative approach, foundational models"</s>,</div>
    <div class="t j ln" style="left:30px;top:148px">571</div><div class="t j" style="left:160px;top:148px"><u>"next_section_summary"</u>: <s>"The section primarily focuses on references and endnotes related</s></div>
    <div class="t j ln" style="left:30px;top:166px">572</div><div class="t j" style="left:131px;top:166px">},</div>
    <div class="t j ln" style="left:30px;top:184px">573</div><div class="t j" style="left:131px;top:184px"><u>"score"</u>: <b>null</b></div>
    <div class="t j ln" style="left:30px;top:202px">574</div><div class="t j" style="left:102px;top:202px">},</div>
    <div class="t j ln" style="left:30px;top:220px">575</div><div class="t j" style="left:102px;top:220px">{</div>
    <div class="t j ln" style="left:30px;top:238px">576</div><div class="t j" style="left:131px;top:238px"><u>"id"</u>: <s>"355d275f-6cfd-497b-a105-ed698c8ec37f"</s>,</div>
    <div class="t j ln" style="left:30px;top:256px">577</div><div class="t j" style="left:131px;top:256px"><u>"text"</u>: <s>"\n                  Agents</s></div>
    <div class="t j ln" style="left:30px;top:274px">578</div><div class="t j" style="left:131px;top:274px"><u>"media"</u>: <b>null</b>,</div>
    <div class="t j ln" style="left:30px;top:292px">579</div><div class="t j" style="left:131px;top:292px"><u>"metadata"</u>: {</div>
    <div class="t j ln" style="left:30px;top:310px">580</div><div class="t j" style="left:160px;top:310px"><u>"page_number"</u>: <em>42</em>,</div>
    <div class="t j ln" style="left:30px;top:328px">581</div><div class="t j" style="left:160px;top:328px"><u>"section_summary"</u>: <s>"The section primarily focuses on references and endnotes relating to</s></div>
  </div>

  <!-- status bar -->
  <div class="b" style="left:695px;top:700px;width:1124px;height:25px;background:#f9f9f9;border-top:1px solid #ececec;box-sizing:border-box"></div>
  <svg class="i" style="left:700px;top:707px;color:#555" width="12" height="11"><rect x=".5" y=".5" width="11" height="10"/><path d="M4.500 .5v10M1.500 3h2M1.500 5.500h2"/></svg>
  <svg class="i" style="left:726px;top:707px;color:#777" width="12" height="12"><circle cx="6" cy="6" r="5.500"/><path d="M3.500 6l2 2 3-4"/></svg>
  <div class="t sb" style="left:742px;top:713px">Online</div>
  <svg class="i" style="left:787px;top:707px;color:#777" width="12" height="12"><circle cx="5.500" cy="5.500" r="5"/><path d="M9 9l3 3"/></svg>
  <div class="t sb" style="left:803px;top:713px">Find and replace</div>
  <svg class="i" style="left:901px;top:707px;color:#888" width="12" height="12"><rect x=".5" y=".5" width="10" height="10"/><path d="M.5 3h10M2.500 5.500l2 1.500-2 1.500M5.500 9h3"/></svg>
  <div class="t sb" style="left:917px;top:713px">Console</div>
  <svg class="i" style="left:1468px;top:706px;color:#5b4a9e" width="12" height="14"><circle cx="6" cy="8" r="5"/><path d="M3 1l1.500 2M9 1L7.500 3M4 7l2 3 2-3"/></svg>
  <div class="t sb" style="left:1484px;top:713px;color:#5b4a9e">Postbot</div>
  <svg class="i" style="left:1541px;top:707px;color:#777" width="11" height="12"><rect x=".5" y=".5" width="10" height="11"/><path d="M4 4l3 2-3 2z" fill="#777"/></svg>
  <div class="t sb" style="left:1557px;top:713px">Runner</div>
  <svg class="i" style="left:1610px;top:706px;color:#777" width="12" height="13"><circle cx="3" cy="10" r="2"/><path d="M4 8l4-4 2 2M8 1c2 0 3 1 3 3"/></svg>
  <div class="t sb" style="left:1626px;top:713px">Start Proxy</div>
  <svg class="i" style="left:1700px;top:706px;color:#777" width="13" height="13"><path d="M6.500.500a6 6 0 1 0 6 6 3 3 0 0 1-3-3 3 3 0 0 1-3-3z"/><circle cx="5" cy="6" r="1"/><circle cx="8" cy="9" r="1"/></svg>
  <div class="t sb" style="left:1716px;top:713px">Cookies</div>
  <svg class="i" style="left:1774px;top:706px;color:#777" width="12" height="13"><path d="M6 .500l5.500 4v8H.500v-8z"/><circle cx="6" cy="8" r="1"/></svg>
  <div class="t sb" style="left:1790px;top:713px">Vault</div>
</div>
</body>
</html>
